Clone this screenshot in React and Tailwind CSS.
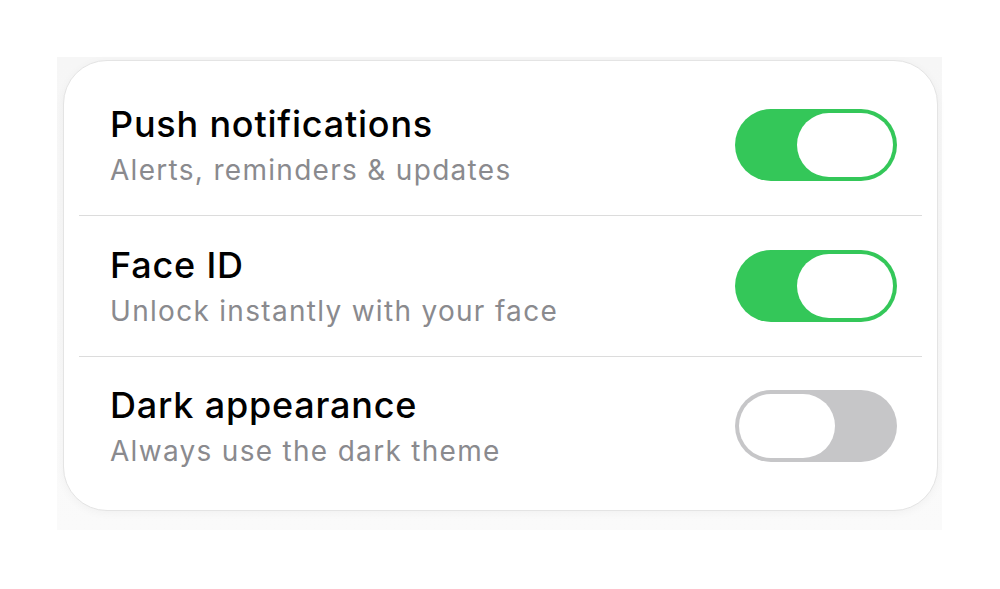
import React from 'react';

const settings = [
    { title: 'Push notifications', subtitle: 'Alerts, reminders & updates', on: true },
    { title: 'Face ID', subtitle: 'Unlock instantly with your face', on: true },
    { title: 'Dark appearance', subtitle: 'Always use the dark theme', on: false },
];

function Toggle({ on }) {
    return (
        <div
            className={`w-[162px] h-[72px] rounded-full p-[4px] flex shrink-0 ${
                on ? 'bg-[#34c759] justify-end' : 'bg-[#c6c6c8] justify-start'
            }`}
        >
            <div className="w-[96px] h-[64px] rounded-full bg-white" />
        </div>
    );
}

export default function App() {
    return (
        <div
            className="w-[1000px] h-[589px] bg-white pt-[57px] pl-[57px] antialiased"
            style={{ fontFamily: 'Inter, "Noto Sans", sans-serif' }}
        >
            <div className="w-[885px] h-[473px] bg-gradient-to-b from-[#f6f6f6] to-[#fafafa] pt-[3px] pl-[6px]">
                <div className="w-[875px] h-[451px] bg-white rounded-[44px] border border-[#e4e4e4] shadow-[0_2px_10px_rgba(0,0,0,0.04)] py-[14px] px-[15px] flex flex-col">
                    {settings.map((s, i) => (
                        <div
                            key={s.title}
                            className={`h-[141px] flex items-center justify-between pl-[31px] pr-[25px] ${
                                i > 0 ? 'border-t border-[#dcdcdc]' : ''
                            }`}
                        >
                            <div className="flex flex-col">
                                <span className="text-[36px] leading-[44px] text-black font-medium tracking-[0.8px]">
                                    {s.title}
                                </span>
                                <span className="mt-[6px] text-[28px] leading-[36px] text-[#8a8a8e] tracking-[1.3px]">
                                    {s.subtitle}
                                </span>
                            </div>
                            <Toggle on={s.on} />
                        </div>
                    ))}
                </div>
            </div>
        </div>
    );
}
